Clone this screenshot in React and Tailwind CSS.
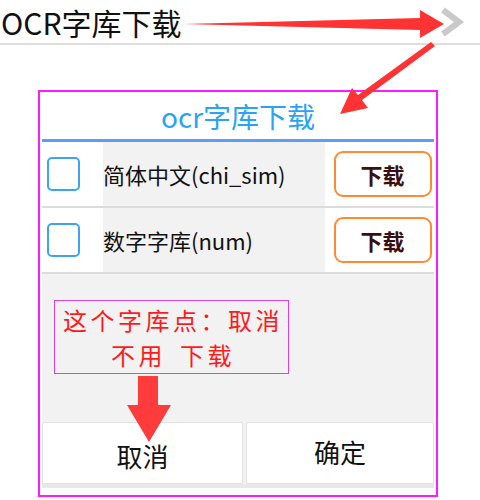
const font = { fontFamily: '"Noto Sans CJK SC", "Noto Sans", sans-serif' };

const Row = ({ label }) => (
  <div className="flex h-[66px] items-stretch border-b-2 border-[#dcdcdc]">
    <div className="flex w-[61px] items-center pl-[5px]">
      <div className="h-[34px] w-[33px] rounded-[5px] border-2 border-[#40a2f6]" />
    </div>
    <div className="flex w-[222px] items-center bg-[#f2f2f2] text-[22px] text-[#111]">
      {label}
    </div>
    <div className="flex flex-1 items-center justify-center pl-[6px]">
      <button className="h-[46px] w-[98px] rounded-[9px] border-2 border-[#ff8a33] bg-white text-[22px] font-bold text-[#3a0f0f]">
        下载
      </button>
    </div>
  </div>
);

export default function App() {
  return (
    <div className="relative h-[500px] w-[480px] overflow-hidden bg-white" style={font}>
      <div className="flex h-[45px] items-center justify-between border-b-2 border-[#dddddd] pl-[1px] pr-[15px]">
        <span className="text-[30px] leading-none text-[#111]">OCR字库下载</span>
        <svg width="26" height="30" viewBox="0 0 26 30">
          <path d="M4 3 L20 15 L4 27" fill="none" stroke="#c9c9c9" strokeWidth="6" />
        </svg>
      </div>

      <div className="ml-[38px] mt-[45px] h-[407px] w-[400px] border-2 border-[#ff1aff] px-[2px]">
        <div className="flex h-[47px] items-center justify-center text-[28px] text-[#2aa3f7]">
          ocr字库下载
        </div>
        <div className="h-[3px] bg-[#5e9cf5]" />
        <Row label="简体中文(chi_sim)" />
        <Row label="数字字库(num)" />
        <div className="h-[148px] bg-[#f2f2f2] pl-[12px] pt-[26px]">
          <div className="flex w-[235px] flex-col items-center border border-[#e040e0] py-[1px] text-[24px] leading-[35px] tracking-[3.5px] text-[#ff1a1a]">
            <div className="pl-[3px]">这个字库点：取消</div>
            <div className="flex gap-[14px] pl-[3px]">
              <span>不用</span>
              <span>下载</span>
            </div>
          </div>
        </div>
        <div className="flex h-[62px] gap-[3px] bg-[#f2f2f2]">
          <div className="flex w-[201px] items-center justify-center rounded-t-[2px] border border-[#e2e2e2] bg-white pt-[4px] text-[26px] text-[#111]">
            取消
          </div>
          <div className="flex flex-1 items-center justify-center rounded-t-[2px] border border-[#e2e2e2] bg-white pb-[4px] text-[26px] text-[#111]">
            确定
          </div>
        </div>
        <div className="h-[4px] bg-[#e8e8e8]" />
      </div>

      <svg className="pointer-events-none absolute left-0 top-0" width="480" height="500" viewBox="0 0 480 500">
        <polygon points="183,24 420,18 420,10 444,24 420,38 420,30" fill="#ff3333" />
        <polygon points="431,42 435,46 362,100 368,108 340,114 352,88 358,95" fill="#ff3333" />
        <polygon points="138,376 158,376 158,405 171,405 149,442 127,405 138,405" fill="#ff3b3b" />
      </svg>
    </div>
  );
}
